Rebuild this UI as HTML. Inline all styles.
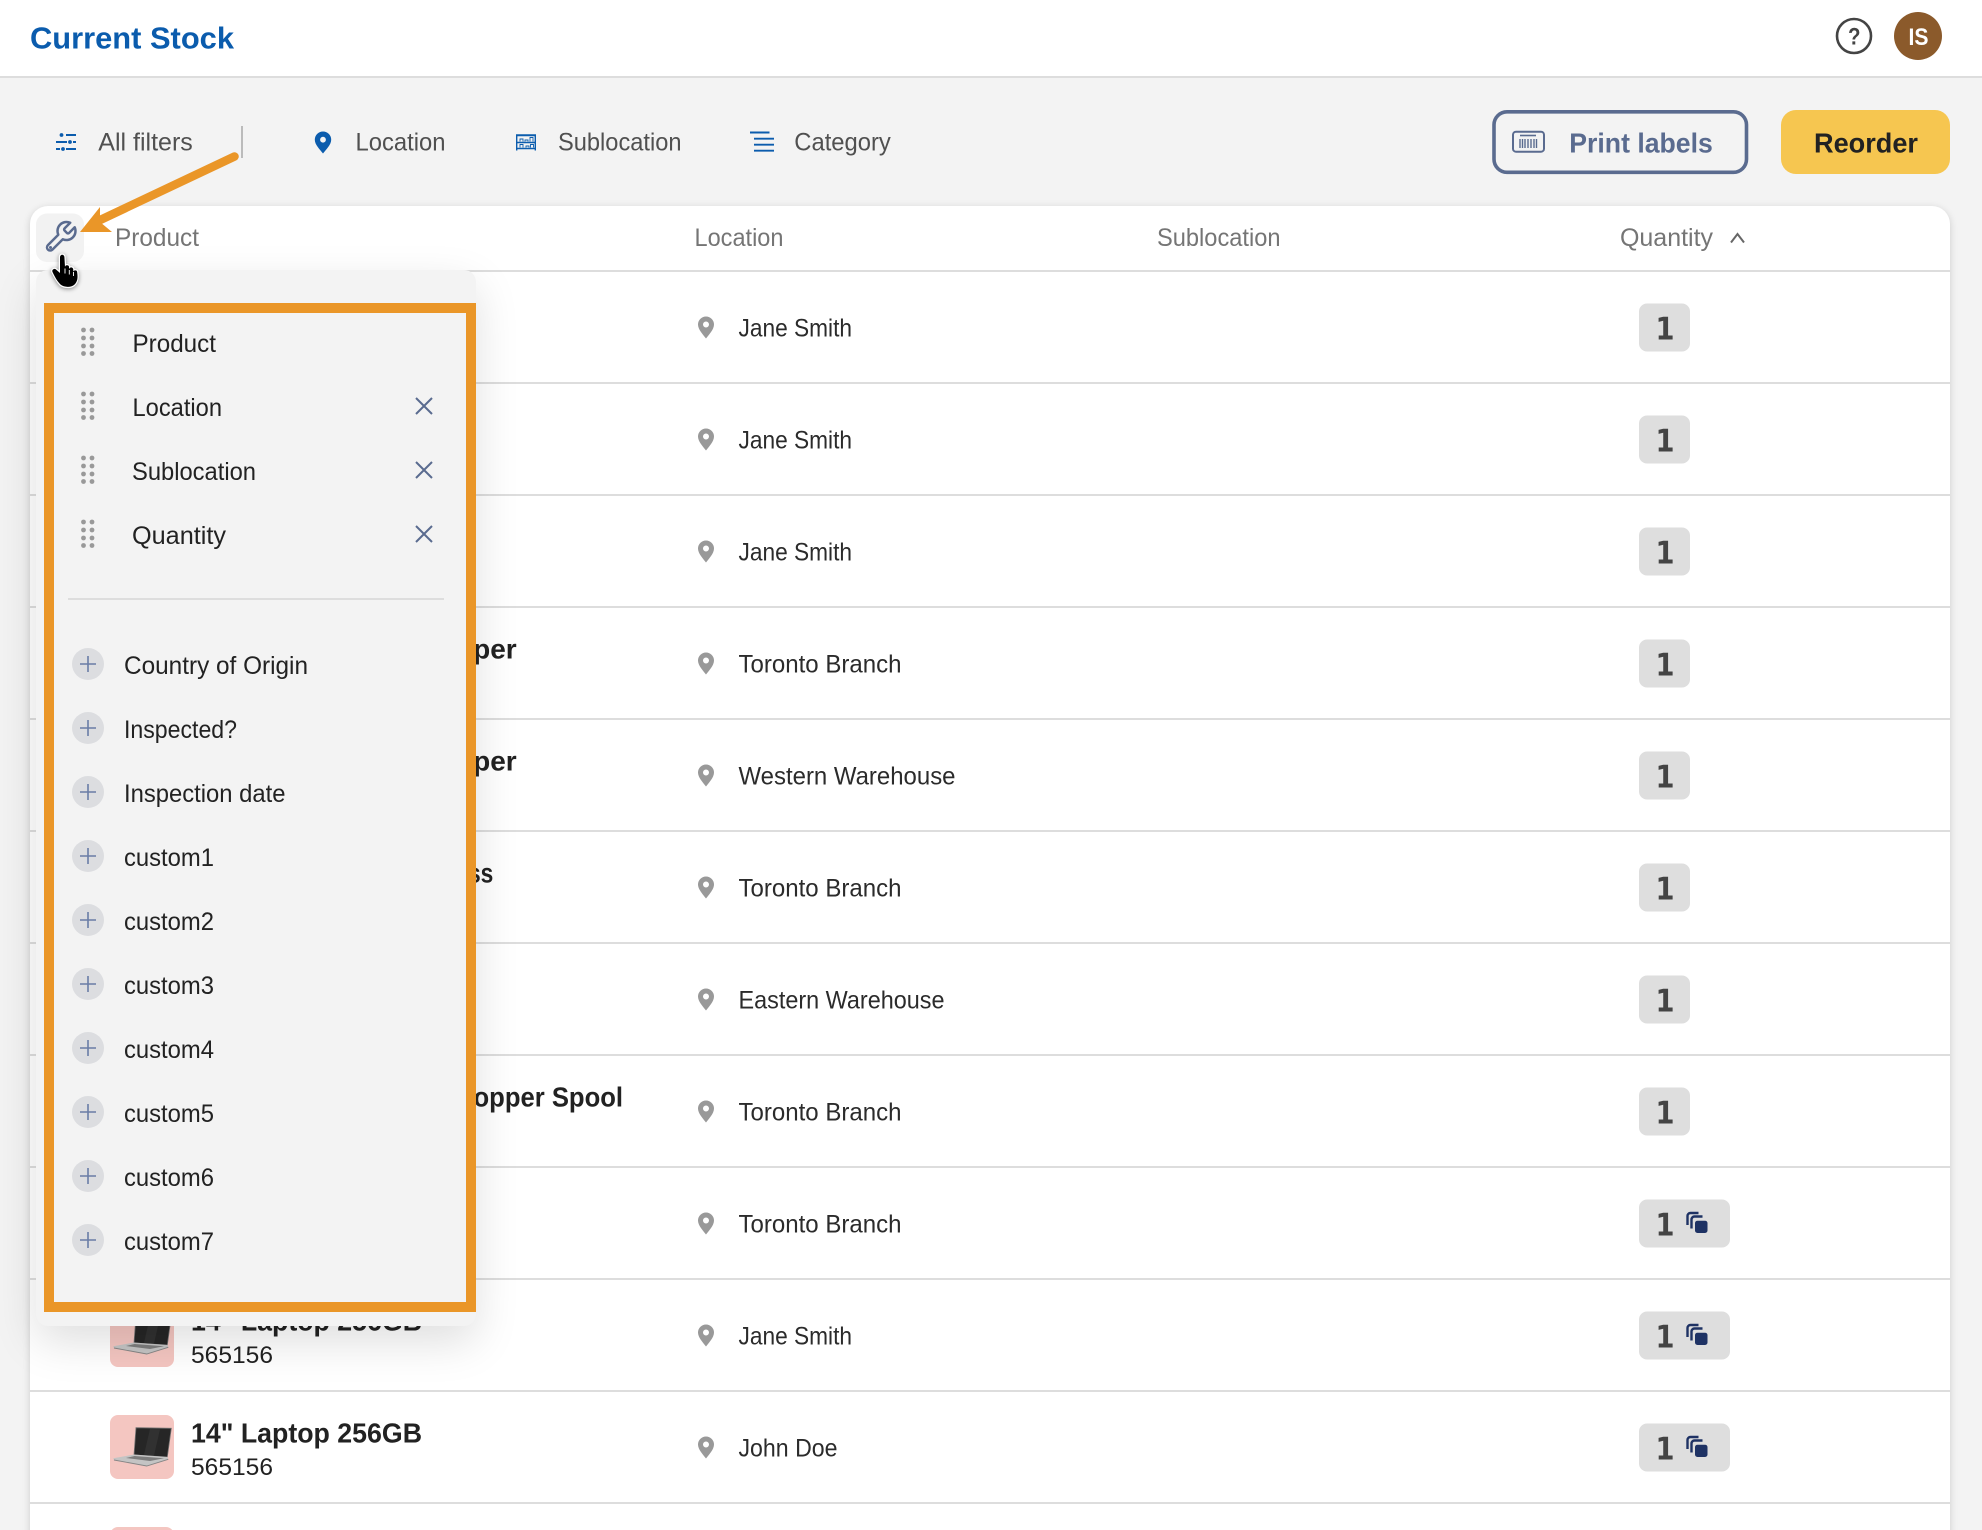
<!DOCTYPE html>
<html lang="en"><head><meta charset="utf-8"><title>Current Stock</title>
<style>
html,body{margin:0;padding:0;background:#f3f3f3}
#p{position:relative;width:1982px;height:1530px;overflow:hidden;background:#f3f3f3}
#p>*{position:absolute}
svg{left:0;top:0;display:block}
text{font-family:"Liberation Sans",sans-serif;font-size:25px;white-space:pre}
.hd{left:0;top:0;width:1982px;height:76px;background:#fff;border-bottom:2px solid #ddd}
.card{left:30px;top:206px;width:1920px;height:1400px;background:#fff;border-radius:18px;box-shadow:0 2px 8px rgba(0,0,0,.16)}
.pop{left:36px;top:270px;width:440px;height:1056px;background:#f3f3f3;border-radius:12px;box-shadow:0 16px 44px rgba(0,0,0,.13)}
.b{font-weight:700;font-size:28px;fill:#222}
.s{fill:#222;font-size:24.5px}
.l{fill:#2b2b2b}
.f{fill:#505050}
.h{fill:#757575}
.m{fill:#222}
.q{font-family:"DejaVu Sans",sans-serif;font-weight:700;font-size:31px;fill:#444;text-anchor:middle}
</style></head><body>
<div id="p">
<div class="hd"></div>
<div class="card"></div>

<svg width="1982" height="1530" viewBox="0 0 1982 1530">
<defs>
<path id="pin" fill="#999" fill-rule="evenodd" d="M0-10.500a8 8 0 0 1 8 8c0 5-5 10-8 14c-3-4-8-9-8-14a8 8 0 0 1 8-8zM0-5.500a3 3 0 1 0 0 6a3 3 0 0 0 0-6z"/>
<g id="lap">
<rect width="64" height="64" rx="8" fill="#f4c6c1"/>
<path d="M26 12.700L61.300 13.300L57.300 42L24 40Z" fill="#262626" stroke="#707070" stroke-width=".8"/>
<path d="M40 14L50 14.300L44 40.500L34 39.700Z" fill="#313131"/>
<path d="M3.300 43.300L24 39.500L57.500 42L58.300 44.300L36.700 51L4 45Z" fill="#c4c4c4"/>
<path d="M16 43L24.500 41L54 43.200L40 46Z" fill="#7d7d7d"/>
<path d="M4 45L36.700 51L58.300 44.300" fill="none" stroke="#858585" stroke-width=".9"/>
</g>
<path id="cp" fill="none" stroke="#1e3264" stroke-width="2.400" d="M-8.500 3V-6a3 3 0 0 1 3-3h8M-4.500 6.500V-2.500a3 3 0 0 1 3-3h8"/>
</defs>

<!-- header -->
<text x="30" y="48.700" textLength="204" lengthAdjust="spacingAndGlyphs" style="font-weight:700;font-size:31px;fill:#0b5cad">Current Stock</text>
<circle cx="1854" cy="36" r="17" fill="none" stroke="#444" stroke-width="2.600"/>
<text x="1848" y="44.500" textLength="12.500" lengthAdjust="spacingAndGlyphs" style="font-weight:700;font-size:24px;fill:#444">?</text>
<circle cx="1918" cy="36" r="24" fill="#8b5a2b"/>
<text x="1908.500" y="45" textLength="20" lengthAdjust="spacingAndGlyphs" style="font-weight:700;font-size:24px;fill:#fff">IS</text>

<!-- filter bar -->
<g stroke="#0b5cad" stroke-width="1.900" fill="none">
<path d="M66 135h10M56 142h11M73 142h3M56 149h4M66 149h10"/>
<path d="M750 132.500h19.500M754 138.700h20M754 144.700h20M754 150.700h20"/>
<path d="M516.700 150.500V135h18.600v15.500M516.700 135.500h18.600M516.700 142.500h18.600M516.700 148.500h18.600" stroke-width="1.400"/>
<path d="M520 141.500v-2.500h3v2.500M525 141.500v-1.500h3v1.500M530 141.500v-4h3v4M520 147.500v-3h3v3M526 147.500v-1.500h3v1.500M530.500 147.500v-3h3v3" stroke-width=".9"/>
</g>
<g fill="#0b5cad">
<circle cx="61.500" cy="135" r="1.900"/><circle cx="70" cy="142" r="1.900"/><circle cx="63" cy="149" r="1.900"/>
<path fill-rule="evenodd" d="M323 131.500a8.200 8.200 0 0 1 8.200 8.200c0 5-5.200 9.800-8.200 13.800c-3-4-8.200-8.800-8.200-13.800a8.200 8.200 0 0 1 8.200-8.200zM323 136.800a2.900 2.900 0 1 0 0 5.800a2.900 2.900 0 0 0 0-5.800z"/>
</g>
<rect x="241" y="126" width="2" height="32" fill="#bbb"/>
<text class="f" x="98.300" y="150.700" textLength="94.500" lengthAdjust="spacingAndGlyphs">All filters</text>
<text class="f" x="355.500" y="150.700" textLength="90" lengthAdjust="spacingAndGlyphs">Location</text>
<text class="f" x="558" y="150.700" textLength="123.500" lengthAdjust="spacingAndGlyphs">Sublocation</text>
<text class="f" x="794.300" y="150.700" textLength="96.500" lengthAdjust="spacingAndGlyphs">Category</text>

<!-- buttons -->
<rect x="1494" y="111.800" width="252.500" height="60.500" rx="13" fill="none" stroke="#5a6b8f" stroke-width="3.600"/>
<rect x="1513" y="131.700" width="31" height="20" rx="3" fill="none" stroke="#5a6b8f" stroke-width="2"/>
<path d="M1520 135.500h16" stroke="#5a6b8f" stroke-width="1.600"/>
<path d="M1520 139v9M1522.500 139v9M1525 139v9M1528 139v9M1531 139v9M1534 139v9M1536.500 139v9" stroke="#5a6b8f" stroke-width="1.400"/>
<text x="1569.300" y="152.300" textLength="143.500" lengthAdjust="spacingAndGlyphs" style="font-weight:700;font-size:28px;fill:#5a6b8f">Print labels</text>
<rect x="1781" y="110" width="169" height="64" rx="15" fill="#f6c650"/>
<text x="1814" y="152.500" textLength="104" lengthAdjust="spacingAndGlyphs" style="font-weight:700;font-size:28px;fill:#222">Reorder</text>

<!-- table head -->
<text class="h" x="115" y="246" textLength="84" lengthAdjust="spacingAndGlyphs">Product</text>
<text class="h" x="694.500" y="246" textLength="89" lengthAdjust="spacingAndGlyphs">Location</text>
<text class="h" x="1157" y="246" textLength="123.500" lengthAdjust="spacingAndGlyphs">Sublocation</text>
<text class="h" x="1620" y="246" textLength="93" lengthAdjust="spacingAndGlyphs">Quantity</text>
<path d="M1731 242.500L1737.500 234L1744 242.500" fill="none" stroke="#666" stroke-width="2"/>

<!-- row lines -->
<g fill="#ddd">
<rect x="30" y="270" width="1920" height="2"/>
<rect x="30" y="382" width="1920" height="2"/>
<rect x="30" y="494" width="1920" height="2"/>
<rect x="30" y="606" width="1920" height="2"/>
<rect x="30" y="718" width="1920" height="2"/>
<rect x="30" y="830" width="1920" height="2"/>
<rect x="30" y="942" width="1920" height="2"/>
<rect x="30" y="1054" width="1920" height="2"/>
<rect x="30" y="1166" width="1920" height="2"/>
<rect x="30" y="1278" width="1920" height="2"/>
<rect x="30" y="1390" width="1920" height="2"/>
<rect x="30" y="1502" width="1920" height="2"/>
</g>

<!-- product cells -->
<text class="b" x="516.700" y="658.700" text-anchor="end">Copper</text>
<text class="b" x="516.700" y="770.700" text-anchor="end">Copper</text>
<text class="b" x="393.300" y="882.700" textLength="100" lengthAdjust="spacingAndGlyphs">Stainless</text>
<text class="b" x="455" y="1106.700" textLength="168" lengthAdjust="spacingAndGlyphs">Copper Spool</text>

<use href="#lap" x="110" y="1303"/>
<text class="b" x="191" y="1330.700" textLength="231" lengthAdjust="spacingAndGlyphs">14" Laptop 256GB</text>
<text class="s" x="191" y="1363" textLength="82" lengthAdjust="spacingAndGlyphs">565156</text>
<use href="#lap" x="110" y="1415"/>
<text class="b" x="191" y="1442.700" textLength="231" lengthAdjust="spacingAndGlyphs">14" Laptop 256GB</text>
<text class="s" x="191" y="1475" textLength="82" lengthAdjust="spacingAndGlyphs">565156</text>
<use href="#lap" x="110" y="1527"/>

<!-- location cells -->
<use href="#pin" x="706" y="327"/><text class="l" x="738.500" y="336.700" textLength="113.500" lengthAdjust="spacingAndGlyphs">Jane Smith</text>
<use href="#pin" x="706" y="439"/><text class="l" x="738.500" y="448.700" textLength="113.500" lengthAdjust="spacingAndGlyphs">Jane Smith</text>
<use href="#pin" x="706" y="551"/><text class="l" x="738.500" y="560.700" textLength="113.500" lengthAdjust="spacingAndGlyphs">Jane Smith</text>
<use href="#pin" x="706" y="663"/><text class="l" x="738.500" y="672.700" textLength="163" lengthAdjust="spacingAndGlyphs">Toronto Branch</text>
<use href="#pin" x="706" y="775"/><text class="l" x="738.500" y="784.700" textLength="217" lengthAdjust="spacingAndGlyphs">Western Warehouse</text>
<use href="#pin" x="706" y="887"/><text class="l" x="738.500" y="896.700" textLength="163" lengthAdjust="spacingAndGlyphs">Toronto Branch</text>
<use href="#pin" x="706" y="999"/><text class="l" x="738.500" y="1008.700" textLength="206" lengthAdjust="spacingAndGlyphs">Eastern Warehouse</text>
<use href="#pin" x="706" y="1111"/><text class="l" x="738.500" y="1120.700" textLength="163" lengthAdjust="spacingAndGlyphs">Toronto Branch</text>
<use href="#pin" x="706" y="1223"/><text class="l" x="738.500" y="1232.700" textLength="163" lengthAdjust="spacingAndGlyphs">Toronto Branch</text>
<use href="#pin" x="706" y="1335"/><text class="l" x="738.500" y="1344.700" textLength="113.500" lengthAdjust="spacingAndGlyphs">Jane Smith</text>
<use href="#pin" x="706" y="1447"/><text class="l" x="738.500" y="1456.700" textLength="99" lengthAdjust="spacingAndGlyphs">John Doe</text>

<!-- quantity cells -->
<g fill="#dedede">
<rect x="1639" y="303.500" width="51" height="48" rx="8"/>
<rect x="1639" y="415.500" width="51" height="48" rx="8"/>
<rect x="1639" y="527.500" width="51" height="48" rx="8"/>
<rect x="1639" y="639.500" width="51" height="48" rx="8"/>
<rect x="1639" y="751.500" width="51" height="48" rx="8"/>
<rect x="1639" y="863.500" width="51" height="48" rx="8"/>
<rect x="1639" y="975.500" width="51" height="48" rx="8"/>
<rect x="1639" y="1087.500" width="51" height="48" rx="8"/>
<rect x="1639" y="1199.500" width="91" height="48" rx="8"/>
<rect x="1639" y="1311.500" width="91" height="48" rx="8"/>
<rect x="1639" y="1423.500" width="91" height="48" rx="8"/>
</g>
<text class="q" x="1665" y="339.300" textLength="19" lengthAdjust="spacingAndGlyphs">1</text>
<text class="q" x="1665" y="451.300" textLength="19" lengthAdjust="spacingAndGlyphs">1</text>
<text class="q" x="1665" y="563.300" textLength="19" lengthAdjust="spacingAndGlyphs">1</text>
<text class="q" x="1665" y="675.300" textLength="19" lengthAdjust="spacingAndGlyphs">1</text>
<text class="q" x="1665" y="787.300" textLength="19" lengthAdjust="spacingAndGlyphs">1</text>
<text class="q" x="1665" y="899.300" textLength="19" lengthAdjust="spacingAndGlyphs">1</text>
<text class="q" x="1665" y="1011.300" textLength="19" lengthAdjust="spacingAndGlyphs">1</text>
<text class="q" x="1665" y="1123.300" textLength="19" lengthAdjust="spacingAndGlyphs">1</text>
<text class="q" x="1665" y="1235.300" textLength="19" lengthAdjust="spacingAndGlyphs">1</text>
<text class="q" x="1665" y="1347.300" textLength="19" lengthAdjust="spacingAndGlyphs">1</text>
<text class="q" x="1665" y="1459.300" textLength="19" lengthAdjust="spacingAndGlyphs">1</text>
<g>
<use href="#cp" x="1696" y="1222"/><rect x="1695" y="1220.700" width="12.500" height="12.300" rx="2.500" fill="#1e3264"/>
<use href="#cp" x="1696" y="1334"/><rect x="1695" y="1332.700" width="12.500" height="12.300" rx="2.500" fill="#1e3264"/>
<use href="#cp" x="1696" y="1446"/><rect x="1695" y="1444.700" width="12.500" height="12.300" rx="2.500" fill="#1e3264"/>
</g>
</svg>

<div class="pop"></div>

<svg width="1982" height="1530" viewBox="0 0 1982 1530">
<!-- tool button -->
<rect x="36" y="213.500" width="48" height="48.500" rx="11" fill="#f2f2f2"/>
<path transform="translate(42.500 219) scale(1.500)" fill="none" stroke="#5a6b8f" stroke-width="1.650" stroke-linejoin="round" d="M14.700 6.300a1 1 0 0 0 0 1.400l1.600 1.600a1 1 0 0 0 1.400 0l3.770-3.770a6 6 0 0 1-7.940 7.940l-6.910 6.910a2.120 2.120 0 0 1-3-3l6.910-6.910a6 6 0 0 1 7.940-7.940l-3.760 3.760z"/>
<circle cx="50.500" cy="247.500" r="1.500" fill="#5a6b8f"/>

<!-- orange box -->
<rect x="49" y="308" width="422" height="999" fill="#f3f3f3" stroke="#ea9628" stroke-width="10"/>

<!-- active columns -->
<g fill="#999">
<circle cx="83.500" cy="330" r="2.400"/><circle cx="92" cy="330" r="2.400"/><circle cx="83.500" cy="338" r="2.400"/><circle cx="92" cy="338" r="2.400"/><circle cx="83.500" cy="346" r="2.400"/><circle cx="92" cy="346" r="2.400"/><circle cx="83.500" cy="353.500" r="2.400"/><circle cx="92" cy="353.500" r="2.400"/>
<circle cx="83.500" cy="394" r="2.400"/><circle cx="92" cy="394" r="2.400"/><circle cx="83.500" cy="402" r="2.400"/><circle cx="92" cy="402" r="2.400"/><circle cx="83.500" cy="410" r="2.400"/><circle cx="92" cy="410" r="2.400"/><circle cx="83.500" cy="417.500" r="2.400"/><circle cx="92" cy="417.500" r="2.400"/>
<circle cx="83.500" cy="458" r="2.400"/><circle cx="92" cy="458" r="2.400"/><circle cx="83.500" cy="466" r="2.400"/><circle cx="92" cy="466" r="2.400"/><circle cx="83.500" cy="474" r="2.400"/><circle cx="92" cy="474" r="2.400"/><circle cx="83.500" cy="481.500" r="2.400"/><circle cx="92" cy="481.500" r="2.400"/>
<circle cx="83.500" cy="522" r="2.400"/><circle cx="92" cy="522" r="2.400"/><circle cx="83.500" cy="530" r="2.400"/><circle cx="92" cy="530" r="2.400"/><circle cx="83.500" cy="538" r="2.400"/><circle cx="92" cy="538" r="2.400"/><circle cx="83.500" cy="545.500" r="2.400"/><circle cx="92" cy="545.500" r="2.400"/>
</g>
<text class="m" x="132.500" y="352" textLength="83.500" lengthAdjust="spacingAndGlyphs">Product</text>
<text class="m" x="132.500" y="416" textLength="89.500" lengthAdjust="spacingAndGlyphs">Location</text>
<text class="m" x="132" y="480" textLength="124" lengthAdjust="spacingAndGlyphs">Sublocation</text>
<text class="m" x="132" y="544" textLength="94" lengthAdjust="spacingAndGlyphs">Quantity</text>
<path d="M416 398l16 16M432 398l-16 16M416 462l16 16M432 462l-16 16M416 526l16 16M432 526l-16 16" stroke="#5a6b8f" stroke-width="2" fill="none"/>
<rect x="68" y="598" width="376" height="2" fill="#ddd"/>

<!-- available columns -->
<g fill="#dcdde0">
<circle cx="88" cy="664" r="16"/><circle cx="88" cy="728" r="16"/><circle cx="88" cy="792" r="16"/><circle cx="88" cy="856" r="16"/><circle cx="88" cy="920" r="16"/><circle cx="88" cy="984" r="16"/><circle cx="88" cy="1048" r="16"/><circle cx="88" cy="1112" r="16"/><circle cx="88" cy="1176" r="16"/><circle cx="88" cy="1240" r="16"/>
</g>
<path stroke="#6a7da6" stroke-width="1.600" fill="none" d="M80 664h16M88 656v16M80 728h16M88 720v16M80 792h16M88 784v16M80 856h16M88 848v16M80 920h16M88 912v16M80 984h16M88 976v16M80 1048h16M88 1040v16M80 1112h16M88 1104v16M80 1176h16M88 1168v16M80 1240h16M88 1232v16"/>
<text class="m" x="124" y="674" textLength="184" lengthAdjust="spacingAndGlyphs">Country of Origin</text>
<text class="m" x="124" y="738" textLength="113" lengthAdjust="spacingAndGlyphs">Inspected?</text>
<text class="m" x="124" y="802" textLength="161.500" lengthAdjust="spacingAndGlyphs">Inspection date</text>
<text class="m" x="124" y="866" textLength="90" lengthAdjust="spacingAndGlyphs">custom1</text>
<text class="m" x="124" y="930" textLength="90" lengthAdjust="spacingAndGlyphs">custom2</text>
<text class="m" x="124" y="994" textLength="90" lengthAdjust="spacingAndGlyphs">custom3</text>
<text class="m" x="124" y="1058" textLength="90" lengthAdjust="spacingAndGlyphs">custom4</text>
<text class="m" x="124" y="1122" textLength="90" lengthAdjust="spacingAndGlyphs">custom5</text>
<text class="m" x="124" y="1186" textLength="90" lengthAdjust="spacingAndGlyphs">custom6</text>
<text class="m" x="124" y="1250" textLength="90" lengthAdjust="spacingAndGlyphs">custom7</text>

<!-- arrow -->
<path d="M234.500 156.500L96 222" stroke="#ea9628" stroke-width="8.500" stroke-linecap="round" fill="none"/>
<path d="M80 232L100 207L100 222L112 232Z" fill="#ea9628"/>

<!-- hand cursor -->
<path style="filter:drop-shadow(0 1px 2px rgba(0,0,0,.45))" fill="#000" stroke="#fff" stroke-width="2.500" paint-order="stroke" stroke-linejoin="round" d="M60 257a2.200 2.200 0 0 1 4.400 0L65 267a2 2 0 0 1 4 .5l.2 1.500a2 2 0 0 1 4 1l.2 1.500a2 2 0 0 1 3.800 1C78 278 77.500 282 74 285C71 287.500 64 287.500 60.500 284.500C57 281 55 277 52.500 272a2.200 2.200 0 0 1 3.500-2.500l4 3.500z"/>
<path d="M65 268.500v5M69.300 270v4.500M73.500 272v4" stroke="#fff" stroke-width=".9" fill="none"/>
</svg>
</div>
</body></html>
